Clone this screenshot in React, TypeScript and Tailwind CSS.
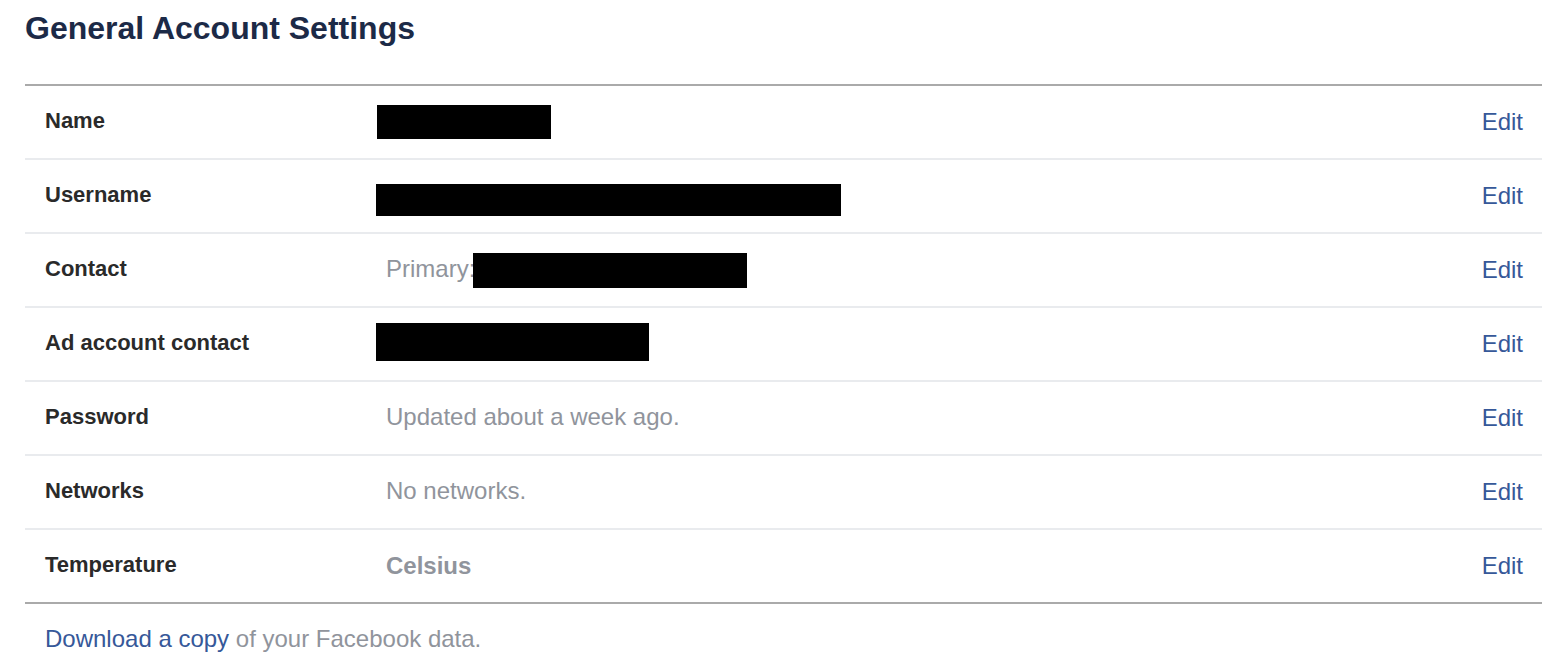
import React from "react";

type Row = {
  label: string;
  value: React.ReactNode;
};

const gray = "pl-[10px] pb-[3px] text-[#90949c]";

const rows: Row[] = [
  { label: "Name", value: <span className="ml-px block h-[34px] w-[174px] bg-black" /> },
  { label: "Username", value: <span className="mt-[7px] block h-[32px] w-[465px] bg-black" /> },
  {
    label: "Contact",
    value: (
      <span className="flex items-center pl-[10px] text-[#90949c]">
        <span className="pb-[3px]">Primary:</span>
        <span className="-ml-[2px] block h-[35px] w-[274px] bg-black" />
      </span>
    ),
  },
  { label: "Ad account contact", value: <span className="-mt-[5px] block h-[38px] w-[273px] bg-black" /> },
  { label: "Password", value: <span className={gray}>Updated about a week ago.</span> },
  { label: "Networks", value: <span className={gray}>No networks.</span> },
  { label: "Temperature", value: <span className="pl-[10px] font-bold text-[#90949c]">Celsius</span> },
];

export default function App() {
  return (
    <div className="min-h-screen bg-white pl-[25px] font-['Liberation_Sans',Arial,sans-serif]">
      <div className="w-[1517px]">
        <h1 className="mt-[10px] mb-[38px] text-[32px] font-bold leading-[36px] text-[#1c2a47]">
          General Account Settings
        </h1>

        <div className="border-t-2 border-[#aaaaaa]">
          {rows.map((row, i) => (
            <div
              key={row.label}
              className={`flex h-[74px] items-center border-b-2 ${
                i === rows.length - 1 ? "border-[#aaaaaa]" : "border-[#e9ebee]"
              }`}
            >
              <div className="w-[351px] shrink-0 pb-[4px] pl-[20px] text-[22px] font-bold text-[#2a2a2a]">
                {row.label}
              </div>
              <div className="flex flex-1 items-center text-[24px]">{row.value}</div>
              <a href="#" className="pr-[19px] text-[24px] text-[#365899]">
                Edit
              </a>
            </div>
          ))}
        </div>

        <p className="mt-[21px] pl-[20px] text-[24px] leading-[28px] text-[#90949c]">
          <a href="#" className="text-[#365899]">
            Download a copy
          </a>{" "}
          of your Facebook data.
        </p>
      </div>
    </div>
  );
}
